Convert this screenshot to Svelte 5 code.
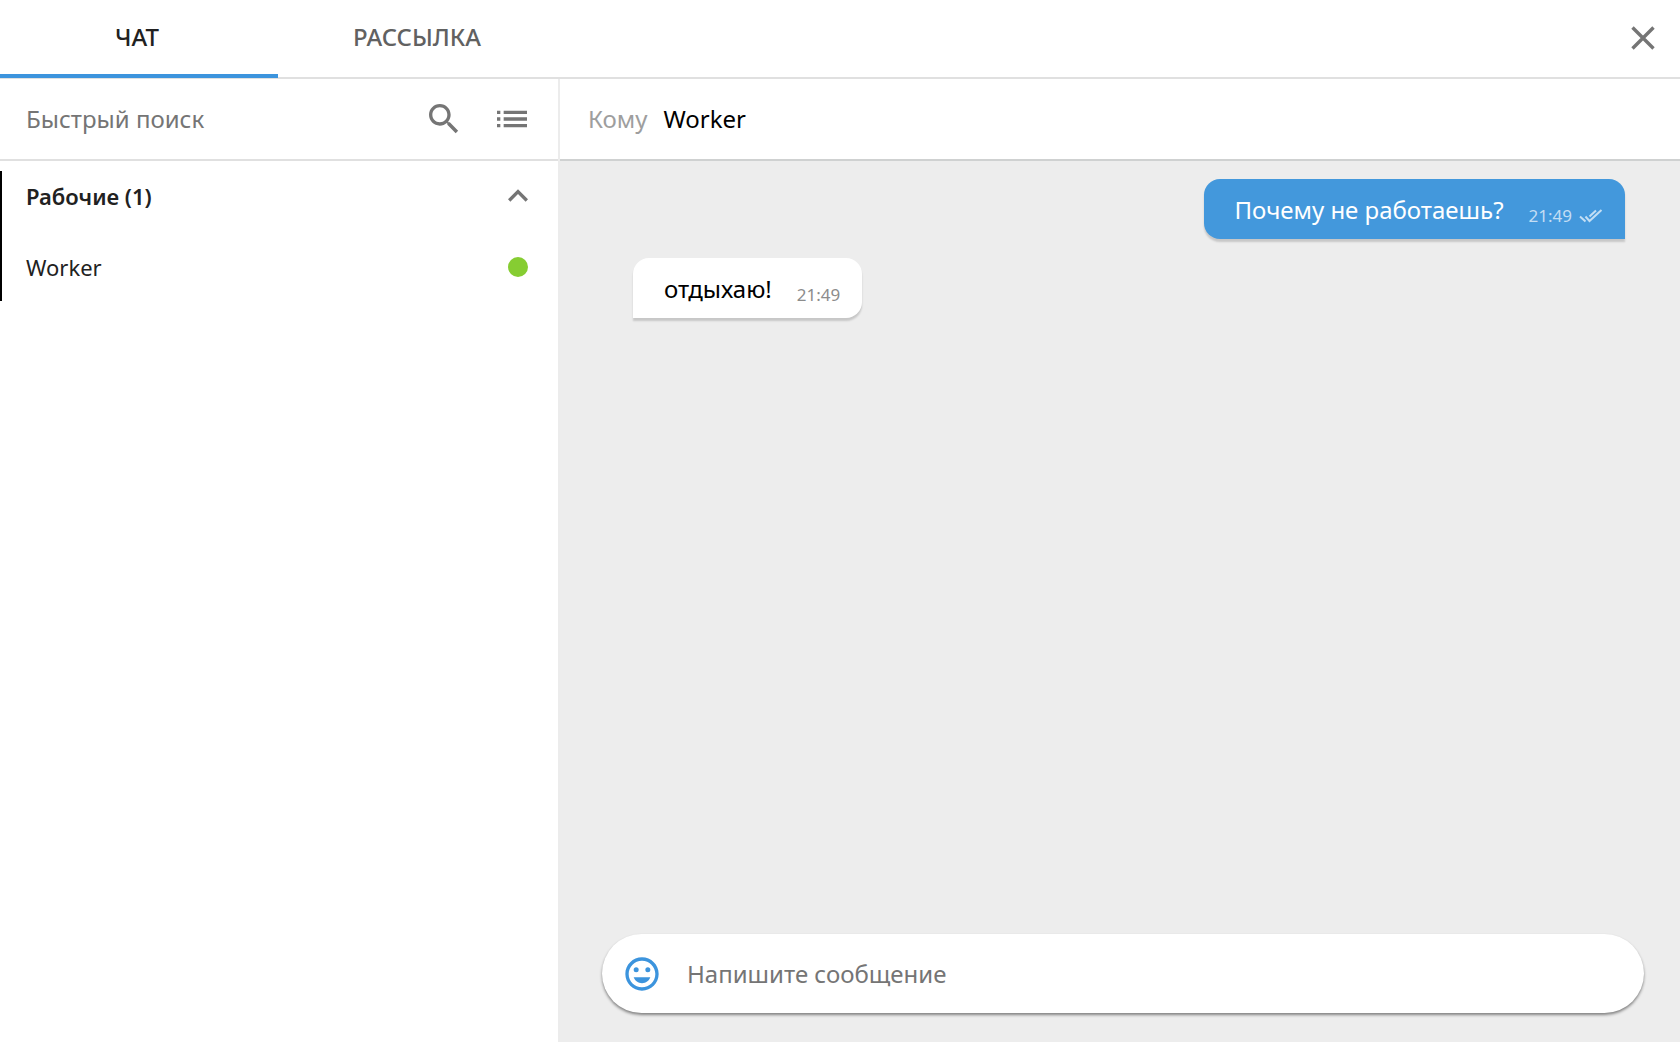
<script lang="ts">
  interface Contact {
    name: string;
    online: boolean;
  }

  interface Message {
    text: string;
    time: string;
    own: boolean;
    read?: boolean;
  }

  const tabs = ['ЧАТ', 'РАССЫЛКА'];
  const contacts: Contact[] = [{ name: 'Worker', online: true }];
  const messages: Message[] = [
    { text: 'Почему не работаешь?', time: '21:49', own: true, read: true },
    { text: 'отдыхаю!', time: '21:49', own: false }
  ];

  let activeTab = $state(0);
  let expanded = $state(true);
  let search = $state('');
  let draft = $state('');
</script>

<div class="app">
  <header class="topbar">
    <nav class="tabs">
      {#each tabs as tab, i}
        <button class="tab" class:active={activeTab === i} onclick={() => (activeTab = i)}>{tab}</button>
      {/each}
    </nav>
    <button class="icon-btn close" aria-label="Закрыть">
      <svg width="40" height="40" viewBox="0 0 40 40" fill="none">
        <path d="M9.5 9.5L30.5 30.5M30.5 9.5L9.5 30.5" stroke="currentColor" stroke-width="3.4" />
      </svg>
    </button>
  </header>

  <div class="body">
    <aside class="sidebar">
      <div class="search">
        <input type="text" placeholder="Быстрый поиск" aria-label="Быстрый поиск" bind:value={search} />
        <button class="icon-btn" aria-label="Найти">
          <svg width="40" height="40" viewBox="0 0 24 24" fill="currentColor">
            <path d="M15.5 14h-.79l-.28-.27C15.41 12.59 16 11.11 16 9.5 16 5.91 13.09 3 9.5 3S3 5.91 3 9.5 5.91 16 9.5 16c1.61 0 3.09-.59 4.23-1.57l.27.28v.79l5 4.99L20.49 19l-4.99-5zm-6 0C7.01 14 5 11.99 5 9.5S7.01 5 9.5 5 14 7.01 14 9.5 11.99 14 9.5 14z" />
          </svg>
        </button>
        <button class="icon-btn" aria-label="Список">
          <svg width="40" height="40" viewBox="0 0 24 24" fill="currentColor">
            <path d="M3 13h2v-2H3v2zm0 4h2v-2H3v2zm0-8h2V7H3v2zm4 4h14v-2H7v2zm0 4h14v-2H7v2zM7 7v2h14V7H7z" />
          </svg>
        </button>
      </div>

      <section class="group">
        <button class="group-title" aria-expanded={expanded} onclick={() => (expanded = !expanded)}>
          <span>Рабочие ({contacts.length})</span>
          <svg class:collapsed={!expanded} width="40" height="40" viewBox="0 0 24 24" fill="currentColor">
            <path d="M12 8l-6 6 1.41 1.41L12 10.83l4.59 4.58L18 14z" />
          </svg>
        </button>
        {#if expanded}
          {#each contacts as contact}
            <button class="contact">
              <span>{contact.name}</span>
              <span class="status" class:online={contact.online}></span>
            </button>
          {/each}
        {/if}
      </section>
    </aside>

    <main class="chat">
      <div class="recipient">
        <span class="label">Кому</span>
        <span>Worker</span>
      </div>

      <div class="messages">
        {#each messages as message}
          <div class="message" class:own={message.own}>
            <span class="text">{message.text}</span>
            <span class="meta">
              <time>{message.time}</time>
              {#if message.read}
                <svg width="24" height="16" viewBox="0 0 24 16" fill="none">
                  <path d="M1 8.5L6.5 13.5M6.5 8.5L10.5 13L22.5 2M10.5 8.5L17 2.5" stroke="currentColor" stroke-width="2" />
                </svg>
              {/if}
            </span>
          </div>
        {/each}
      </div>

      <form class="composer" onsubmit={(e) => e.preventDefault()}>
        <button type="button" class="icon-btn emoji" aria-label="Смайлы">
          <svg width="40" height="40" viewBox="0 0 24 24" fill="currentColor">
            <path d="M11.99 2C6.47 2 2 6.48 2 12s4.47 10 9.99 10C17.52 22 22 17.52 22 12S17.52 2 11.99 2zM12 20c-4.42 0-8-3.58-8-8s3.58-8 8-8 8 3.58 8 8-3.58 8-8 8z" />
            <circle cx="8.5" cy="9.5" r="1.5" />
            <circle cx="15.5" cy="9.5" r="1.5" />
            <path d="M7 14h10c-.8 2.1-2.7 3.5-5 3.5s-4.200-1.400-5-3.500z" />
          </svg>
        </button>
        <input type="text" placeholder="Напишите сообщение" aria-label="Напишите сообщение" bind:value={draft} />
      </form>
    </main>
  </div>
</div>

<style>
  :global(body) {
    margin: 0;
  }

  .app {
    display: flex;
    flex-direction: column;
    height: 100vh;
    background: #fff;
    color: #000;
    font-family: 'Noto Sans', 'Open Sans', sans-serif;
    font-size: 24px;
    line-height: 32px;
  }

  button,
  input {
    padding: 0;
    border: none;
    background: none;
    color: inherit;
    font: inherit;
  }

  button {
    cursor: pointer;
  }

  input {
    flex: 1;
    min-width: 0;
    outline: none;
  }

  input::placeholder {
    color: #757575;
    opacity: 1;
  }

  svg {
    display: block;
  }

  .icon-btn {
    flex-shrink: 0;
    color: #757575;
  }

  .topbar {
    display: flex;
    justify-content: space-between;
    height: 77px;
    flex-shrink: 0;
    border-bottom: 2px solid #e0e0e0;
  }

  .tabs {
    display: flex;
  }

  .tab {
    box-sizing: border-box;
    width: 278px;
    height: 78px;
    border-bottom: 4px solid transparent;
    color: #616161;
    font-weight: 500;
  }

  .tab.active {
    padding-right: 4px;
    border-bottom-color: #3c94dd;
    color: #212121;
  }

  .close {
    margin-right: 17px;
    padding-bottom: 2px;
  }

  .body {
    display: flex;
    flex: 1;
    min-height: 0;
  }

  .sidebar {
    flex: 0 0 558px;
    border-right: 2px solid #ececec;
  }

  .search {
    display: flex;
    align-items: center;
    gap: 28px;
    height: 79px;
    padding: 0 26px 1px;
    border-bottom: 2px solid #e0e0e0;
  }

  .group {
    margin-top: 10px;
    border-left: 2px solid #000;
    color: #212121;
    font-size: 22px;
  }

  .group-title,
  .contact {
    display: flex;
    box-sizing: border-box;
    align-items: center;
    justify-content: space-between;
    width: 100%;
    padding: 0 20px 0 24px;
    text-align: left;
  }

  .group-title {
    height: 50px;
    font-weight: 600;
  }

  .group-title svg {
    color: #757575;
  }

  .collapsed {
    transform: rotate(180deg);
  }

  .contact {
    height: 80px;
    padding-top: 12px;
    padding-right: 30px;
  }

  .status {
    width: 20px;
    height: 20px;
    border-radius: 50%;
    background: #bdbdbd;
  }

  .status.online {
    background: #86cd32;
  }

  .chat {
    display: flex;
    flex: 1;
    flex-direction: column;
    min-width: 0;
    background: #ededed;
  }

  .recipient {
    display: flex;
    align-items: center;
    gap: 16px;
    height: 79px;
    padding: 0 28px 1px;
    border-bottom: 2px solid #cfd1d1;
    background: #fff;
  }

  .label {
    color: #9e9e9e;
  }

  .messages {
    display: flex;
    flex: 1;
    flex-direction: column;
    align-items: flex-start;
    gap: 19px;
    padding: 18px 55px 18px 73px;
    overflow-y: auto;
  }

  .message {
    display: flex;
    align-items: center;
    gap: 25px;
    height: 60px;
    padding: 0 22px 0 31px;
    border-radius: 16px 16px 16px 0;
    background: #fff;
    box-shadow: 0 3px 2px rgba(0, 0, 0, 0.16);
  }

  .message.own {
    align-self: flex-end;
    border-radius: 16px 16px 0 16px;
    background: #4398dc;
    color: #fff;
  }

  .text {
    padding-top: 2px;
  }

  .meta {
    display: flex;
    align-items: center;
    gap: 7px;
    padding-top: 14px;
    color: #8c8c8c;
    font-size: 17px;
    line-height: 24px;
  }

  .own .meta {
    color: #c3def4;
  }

  .composer {
    display: flex;
    align-items: center;
    gap: 25px;
    height: 79px;
    margin: 0 36px 29px 42px;
    padding: 0 40px 0 20px;
    border-radius: 40px;
    background: #fff;
    box-shadow: 0 2px 3px rgba(0, 0, 0, 0.45);
  }

  .emoji {
    color: #3c94dd;
  }
</style>
